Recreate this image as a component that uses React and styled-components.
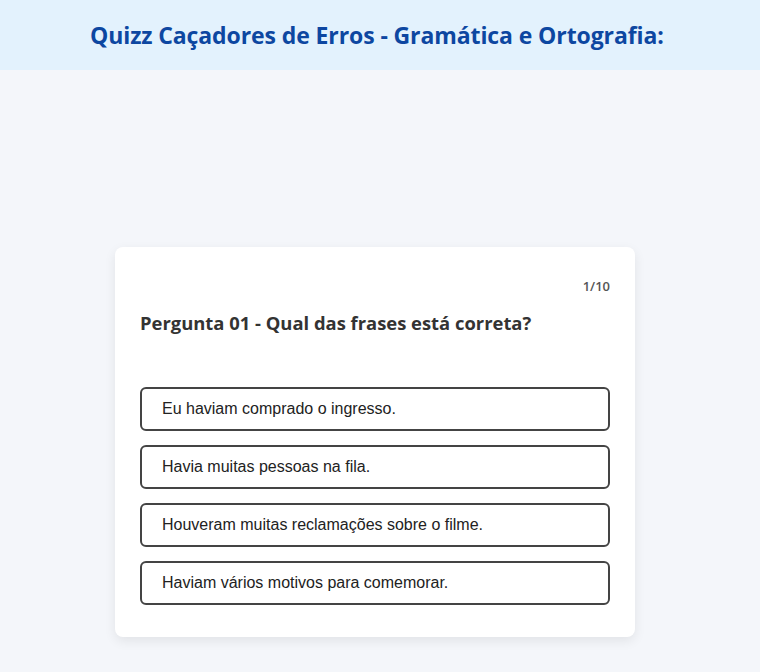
import React from "react";
import styled, { createGlobalStyle } from "styled-components";

const Global = createGlobalStyle`
  html, body { margin: 0; padding: 0; }
  body {
    background: #f4f6fa;
    font-family: "Open Sans", "Noto Sans", sans-serif;
  }
`;

const Page = styled.div`
  min-height: 672px;
  display: flex;
  flex-direction: column;
`;

const Header = styled.header`
  height: 70px;
  background: #e3f2fd;
  display: flex;
  align-items: center;
  padding-left: 90px;
`;

const Title = styled.h1`
  margin: 0;
  font-size: 23px;
  font-weight: 700;
  color: #0d47a1;
  letter-spacing: -0.1px;
`;

const Main = styled.main`
  display: flex;
  justify-content: center;
  padding-top: 177px;
  padding-right: 10px;
`;

const Card = styled.section`
  width: 520px;
  box-sizing: border-box;
  background: #fff;
  border-radius: 8px;
  box-shadow: 0 4px 12px rgba(0, 0, 0, 0.08);
  padding: 30px 25px 32px;
  display: flex;
  flex-direction: column;
`;

const Counter = styled.div`
  align-self: flex-end;
  font-size: 13px;
  font-weight: 600;
  color: #555;
`;

const Question = styled.h2`
  margin: 15px 0 0 0;
  font-size: 18.4px;
  font-weight: 700;
  color: #333;
`;

const Options = styled.div`
  margin-top: 52px;
  display: flex;
  flex-direction: column;
  gap: 14px;
`;

const Option = styled.button`
  height: 44px;
  box-sizing: border-box;
  border: 2px solid #444;
  border-radius: 6px;
  background: #fff;
  text-align: left;
  padding: 0 20px;
  font-family: "Liberation Sans", Arial, sans-serif;
  font-size: 16px;
  color: #222;
  cursor: pointer;
`;

const options = [
  "Eu haviam comprado o ingresso.",
  "Havia muitas pessoas na fila.",
  "Houveram muitas reclamações sobre o filme.",
  "Haviam vários motivos para comemorar.",
];

export default function App() {
  return (
    <Page>
      <Global />
      <Header>
        <Title>Quizz Caçadores de Erros - Gramática e Ortografia:</Title>
      </Header>
      <Main>
        <Card>
          <Counter>1/10</Counter>
          <Question>Pergunta 01 - Qual das frases está correta?</Question>
          <Options>
            {options.map((o) => (
              <Option key={o}>{o}</Option>
            ))}
          </Options>
        </Card>
      </Main>
    </Page>
  );
}
